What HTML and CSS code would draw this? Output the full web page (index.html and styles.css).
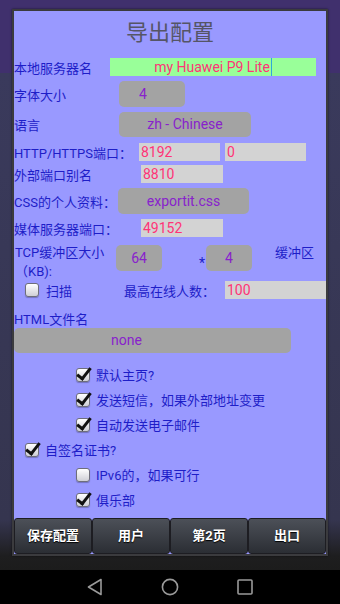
FILE: index.html
```html
<!DOCTYPE html>
<html>

<head>
    <link rel="stylesheet" href="styles.css">
</head>

<body>
    <div class="screen">
        <div class="dialog">
            <div class="form">
                <div class="title">导出配置</div>

                <div class="row r1">
                    <span class="lbl w96">本地服务器名</span>
                    <div class="edit green">my Huawei P9 Lite<span class="cursor"></span></div>
                </div>

                <div class="row r2">
                    <span class="lbl w105">字体大小</span>
                    <div class="btn font-btn">4</div>
                </div>

                <div class="row r3">
                    <span class="lbl w105">语言</span>
                    <div class="btn lang-btn">zh - Chinese</div>
                </div>

                <div class="row r4">
                    <span class="lbl w125">HTTP/HTTPS端口：</span>
                    <div class="edit port">8192</div>
                    <div class="edit port">0</div>
                </div>

                <div class="row r5">
                    <span class="lbl w127">外部端口别名</span>
                    <div class="edit port2">8810</div>
                </div>

                <div class="row r6">
                    <span class="lbl w104">CSS的个人资料：</span>
                    <div class="btn css-btn">exportit.css</div>
                </div>

                <div class="row r7">
                    <span class="lbl w127">媒体服务器端口：</span>
                    <div class="edit port2">49152</div>
                </div>

                <div class="row r8">
                    <span class="lbl tcp">TCP缓冲区大小<br>（KB):</span>
                    <div class="btn small-btn">64</div>
                    <span class="star">*</span>
                    <div class="btn small-btn">4</div>
                    <span class="lbl unit">缓冲区</span>
                </div>

                <div class="row r9">
                    <span class="box"></span>
                    <span class="lbl scan">扫描</span>
                    <span class="lbl max">最高在线人数：</span>
                    <div class="edit users">100</div>
                </div>

                <div class="lbl html-lbl">HTML文件名</div>
                <div class="btn none-btn">none</div>

                <div class="checks">
                    <div class="check sub"><span class="box on"></span>默认主页?</div>
                    <div class="check sub"><span class="box on"></span>发送短信，如果外部地址变更</div>
                    <div class="check sub"><span class="box on"></span>自动发送电子邮件</div>
                    <div class="check"><span class="box on"></span>自签名证书?</div>
                    <div class="check sub"><span class="box"></span>IPv6的，如果可行</div>
                    <div class="check sub"><span class="box on"></span>俱乐部</div>
                </div>
            </div>

            <div class="actions">
                <div class="action">保存配置</div>
                <div class="action">用户</div>
                <div class="action">第2页</div>
                <div class="action">出口</div>
            </div>
        </div>
    </div>

    <div class="navbar">
        <svg width="18" height="18" viewBox="0 0 18 18">
            <path d="M15 1.5 L2.5 9 L15 16.5 Z" fill="none" stroke="#9a9a9a" stroke-width="1.6" stroke-linejoin="round" />
        </svg>
        <svg width="18" height="18" viewBox="0 0 18 18">
            <circle cx="9" cy="9" r="7.6" fill="none" stroke="#9a9a9a" stroke-width="1.6" />
        </svg>
        <svg width="18" height="18" viewBox="0 0 18 18">
            <rect x="2" y="2" width="14" height="14" rx="1" fill="none" stroke="#9a9a9a" stroke-width="1.6" />
        </svg>
    </div>
</body>

</html>
```

FILE: styles.css
```css
* {
    padding: 0;
    margin: 0;
    box-sizing: border-box;
}

body {
    width: 340px;
    height: 604px;
    overflow: hidden;
    background: #000;
    font-family: Roboto, "Noto Sans CJK SC", sans-serif;
}

.screen {
    height: 570px;
    padding-top: 9px;
    background: linear-gradient(#40306d 0, #40306d 73px, #3a3a5c 73px, #35354f 520px, #1e1e1f 556px, #1c1c1c 570px);
}

.dialog {
    width: 316px;
    height: 547px;
    margin-left: 12px;
    border: 2px solid #3b3b3e;
    background: #9999ff;
    display: flex;
    flex-direction: column;
    overflow: hidden;
    box-shadow: 0 0 2px rgba(0, 0, 0, 0.6);
}

.form {
    flex: 1;
}

.title {
    height: 44px;
    line-height: 44px;
    text-align: center;
    font-size: 22px;
    color: #555566;
}

.row {
    display: flex;
    align-items: center;
    white-space: nowrap;
}

.lbl {
    font-size: 13px;
    color: #1e1ec8;
    flex-shrink: 0;
}

.w96 { width: 96px; }
.w104 { width: 104px; }
.w105 { width: 105px; }
.w125 { width: 125px; }
.w127 { width: 127px; }

.edit {
    height: 18px;
    line-height: 18px;
    font-size: 14px;
    color: #ff3377;
    background: #d3d3d3;
    padding-left: 2px;
    flex-shrink: 0;
}

.green {
    width: 206px;
    background: #99ff99;
    text-align: center;
    padding-left: 0;
}

.cursor {
    display: inline-block;
    width: 1px;
    height: 18px;
    margin-left: 1px;
    vertical-align: top;
    background: #2fa8d8;
}

.btn {
    height: 26px;
    line-height: 26px;
    border-radius: 5px;
    background: #a3a3a3;
    color: #8822cc;
    font-size: 14px;
    text-align: center;
    flex-shrink: 0;
}

.r1 { height: 18px; margin-top: 3px; }
.r2 { height: 26px; margin-top: 5px; }
.r3 { height: 25px; margin-top: 5px; }
.r4 { height: 18px; margin-top: 6px; }
.r5 { height: 18px; margin-top: 4px; }
.r6 { height: 26px; margin-top: 5px; }
.r7 { height: 18px; margin-top: 5px; }
.r8 { height: 26px; margin-top: 8px; align-items: flex-start; }
.r9 { height: 18px; margin-top: 10px; padding-left: 11px; }

.r1 .lbl { padding-left: 0; }

.font-btn {
    width: 66px;
    text-align: left;
    padding-left: 20px;
}

.lang-btn {
    width: 132px;
    height: 25px;
    line-height: 25px;
}

.port {
    width: 81px;
    margin-right: 5px;
}

.port2 {
    width: 82px;
}

.css-btn {
    width: 131px;
}

.tcp {
    width: 102px;
    line-height: 19px;
    margin-top: -2px;
    padding-left: 1px;
}

.small-btn {
    width: 46px;
}

.star {
    width: 44px;
    padding-left: 37px;
    font-size: 14px;
    color: #1e1ec8;
    margin-top: 10px;
}

.unit {
    margin-left: 23px;
    line-height: 15px;
}

.box {
    display: inline-block;
    position: relative;
    width: 14px;
    height: 14px;
    border: 1px solid #6e6e7a;
    border-radius: 3px;
    background: linear-gradient(#ffffff, #cfcfd6);
    box-shadow: 0 1px 1px rgba(0, 0, 0, 0.25);
    flex-shrink: 0;
}

/* the check mark sticks out over the top right corner */
.box.on::after {
    content: "";
    position: absolute;
    left: 3px;
    top: -4px;
    width: 5px;
    height: 12px;
    border: solid #111;
    border-width: 0 3px 3px 0;
    transform: rotate(38deg);
    transform-origin: center;
}

.scan {
    margin-left: 7px;
    width: 78px;
}

.max {
    width: 101px;
}

.users {
    width: 115px;
}

.html-lbl {
    height: 17px;
    line-height: 17px;
    margin-top: 12px;
}

.none-btn {
    width: 277px;
    height: 25px;
    line-height: 25px;
    padding-right: 52px;
}

.checks {
    margin-top: 9px;
}

.check {
    height: 25px;
    display: flex;
    align-items: center;
    padding-left: 11px;
    font-size: 13px;
    color: #1e1ec8;
}

.check.sub {
    padding-left: 62px;
}

.check .box {
    margin-right: 6px;
}

.actions {
    height: 36px;
    display: grid;
    grid-template-columns: repeat(4, 1fr);
    background: #9999ff;
}

.action {
    border: 1px solid #1d1d22;
    border-radius: 3px;
    background: linear-gradient(#4c5058, #2b2e34);
    color: #fff;
    font-size: 13px;
    font-weight: bold;
    text-align: center;
    line-height: 34px;
    text-shadow: 0 1px 1px #000;
}

.navbar {
    height: 34px;
    background: #000;
    display: flex;
    align-items: center;
    justify-content: center;
    gap: 57px;
}
```
